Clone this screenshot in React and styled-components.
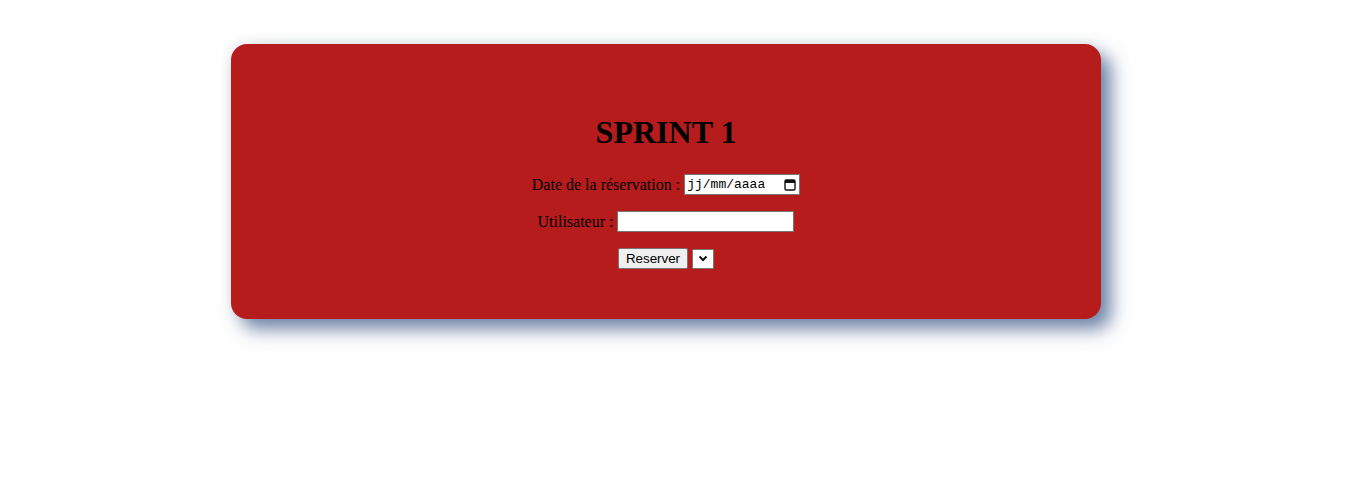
import React from "react";
import styled, { createGlobalStyle } from "styled-components";

const GlobalStyle = createGlobalStyle`
  body {
    margin: 0;
    background: #fefefe;
    font-family: "Liberation Serif", "Times New Roman", serif;
  }
`;

const Page = styled.div`
  padding: 44px 0 0 231px;
  height: 497px;
  box-sizing: border-box;
`;

const Card = styled.div`
  width: 870px;
  height: 275px;
  box-sizing: border-box;
  background: #b71c1c;
  border-radius: 16px;
  box-shadow: 10px 10px 18px rgba(50, 80, 130, 0.7), -2px -2px 12px rgba(0, 0, 0, 0.06);
  display: flex;
  flex-direction: column;
  align-items: center;
  padding-top: 70px;
  color: #000;
`;

const Title = styled.h1`
  margin: 0 0 23px;
  font-size: 32px;
  line-height: 37px;
  font-weight: bold;
`;

const Row = styled.div`
  display: flex;
  align-items: center;
  gap: 4px;
  height: 21px;
  margin-bottom: 16px;
  font-size: 16px;
`;

const FakeDate = styled.div`
  width: 116px;
  height: 21px;
  box-sizing: border-box;
  background: #fff;
  border: 1px solid #767676;
  display: flex;
  align-items: center;
  justify-content: space-between;
  padding: 0 3px 0 2px;
  font-family: "Liberation Mono", "Courier New", monospace;
  font-size: 13px;
`;

const TextInput = styled.input`
  width: 177px;
  height: 21px;
  box-sizing: border-box;
  border: 1px solid #767676;
  border-radius: 0;
  padding: 1px 2px;
  background: #fff;
`;

const Button = styled.button`
  width: 70px;
  height: 21px;
  box-sizing: border-box;
  padding: 1px 6px;
  font-family: "Liberation Sans", Arial, sans-serif;
  font-size: 13.33px;
  color: #000;
  background: #efefef;
  border: 1px solid #767676;
  border-radius: 2px;
`;

const Select = styled.div`
  width: 22px;
  height: 20px;
  box-sizing: border-box;
  background: #fff;
  border: 1px solid #767676;
  border-radius: 1px;
  display: flex;
  align-items: center;
  justify-content: center;
`;

function CalendarIcon() {
  return (
    <svg width="12" height="13" viewBox="0 0 12 13">
      <rect x="1" y="2" width="10" height="10" rx="1.2" fill="none" stroke="#111" strokeWidth="1.4" />
      <rect x="1" y="2" width="10" height="3" fill="#111" />
    </svg>
  );
}

function Chevron() {
  return (
    <svg width="10" height="7" viewBox="0 0 10 7">
      <path d="M1.5 1.5 L5 5 L8.5 1.5" fill="none" stroke="#111" strokeWidth="2" />
    </svg>
  );
}

export default function App() {
  return (
    <Page>
      <GlobalStyle />
      <Card>
        <Title>SPRINT 1</Title>
        <Row>
          <span>Date de la réservation :</span>
          <FakeDate>
            <span>jj/mm/aaaa</span>
            <CalendarIcon />
          </FakeDate>
        </Row>
        <Row>
          <span>Utilisateur :</span>
          <TextInput type="text" />
        </Row>
        <Row>
          <Button>Reserver</Button>
          <Select>
            <Chevron />
          </Select>
        </Row>
      </Card>
    </Page>
  );
}
